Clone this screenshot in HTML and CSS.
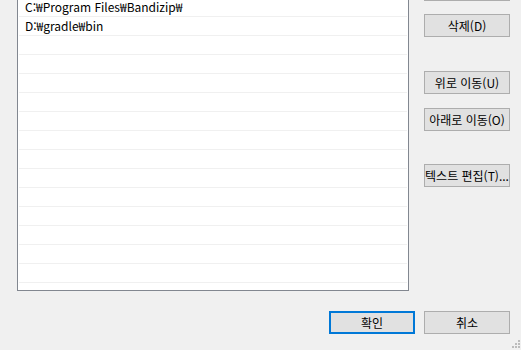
FILE: index.html
```html
<!DOCTYPE html>
<html lang="ko">
<head>
<meta charset="UTF-8">
<title>환경 변수 편집</title>
<link rel="stylesheet" href="styles.css">
</head>
<body>
<div class="dialog">
  <div class="top">
    <div class="path-list">
      <div class="row">C:₩Program Files₩Bandizip₩</div>
      <div class="row">D:₩gradle₩bin</div>
      <div class="row"></div>
      <div class="row"></div>
      <div class="row"></div>
      <div class="row"></div>
      <div class="row"></div>
      <div class="row"></div>
      <div class="row"></div>
      <div class="row"></div>
      <div class="row"></div>
      <div class="row"></div>
      <div class="row"></div>
      <div class="row"></div>
      <div class="row"></div>
      <div class="row"></div>
    </div>
    <div class="side">
      <button class="btn">편집(E)</button>
      <button class="btn btn-delete">삭제(D)</button>
      <button class="btn btn-up">위로 이동(U)</button>
      <button class="btn btn-down">아래로 이동(O)</button>
      <button class="btn btn-text">텍스트 편집(T)...</button>
    </div>
  </div>
  <div class="footer">
    <button class="btn btn-ok">확인</button>
    <button class="btn">취소</button>
  </div>
  <svg class="grip" width="8" height="8" viewBox="0 0 8 8">
    <rect x="6" y="0" width="2" height="2" fill="#bcbcbc"/>
    <rect x="3" y="3" width="2" height="2" fill="#bcbcbc"/>
    <rect x="6" y="3" width="2" height="2" fill="#bcbcbc"/>
    <rect x="0" y="6" width="2" height="2" fill="#bcbcbc"/>
    <rect x="3" y="6" width="2" height="2" fill="#bcbcbc"/>
    <rect x="6" y="6" width="2" height="2" fill="#bcbcbc"/>
  </svg>
</div>
</body>
</html>
```

FILE: styles.css
```css
body {
  margin: 0;
  padding: 0;
  background-color: #f0f0f0;
  font-family: "Noto Sans CJK KR", "Noto Sans", sans-serif;
  font-size: 12px;
  color: #000;
  overflow: hidden;
}

.dialog {
  display: flow-root;
  position: relative;
  width: 521px;
  height: 350px;
  padding-left: 17px;
  box-sizing: border-box;
  overflow: hidden;
}

.top {
  display: flex;
  gap: 15px;
  margin-top: -22px;
}

.path-list {
  width: 388px;
  height: 292px;
  margin-top: 19px;
  padding: 0 1px;
  background: #fff;
  border: 1px solid #828790;
  overflow: hidden;
}

.row {
  height: 18px;
  line-height: 18px;
  padding-left: 6px;
  border-bottom: 1px solid #f0f0f0;
  white-space: nowrap;
}

.side {
  display: flex;
  flex-direction: column;
}

.btn {
  width: 86px;
  height: 23px;
  padding: 0;
  background: #e1e1e1;
  border: 1px solid #adadad;
  font-family: inherit;
  font-size: 12px;
  color: #000;
  white-space: nowrap;
}

.btn-delete {
  margin-top: 13px;
}

.btn-up {
  margin-top: 34px;
}

.btn-down {
  margin-top: 14px;
}

.btn-text {
  margin-top: 33px;
}

.footer {
  display: flex;
  justify-content: flex-end;
  gap: 9px;
  margin-top: 20px;
  padding-right: 11px;
}

.btn-ok {
  border: 2px solid #0078d7;
}

.grip {
  position: absolute;
  right: 1px;
  bottom: 2px;
}
```
